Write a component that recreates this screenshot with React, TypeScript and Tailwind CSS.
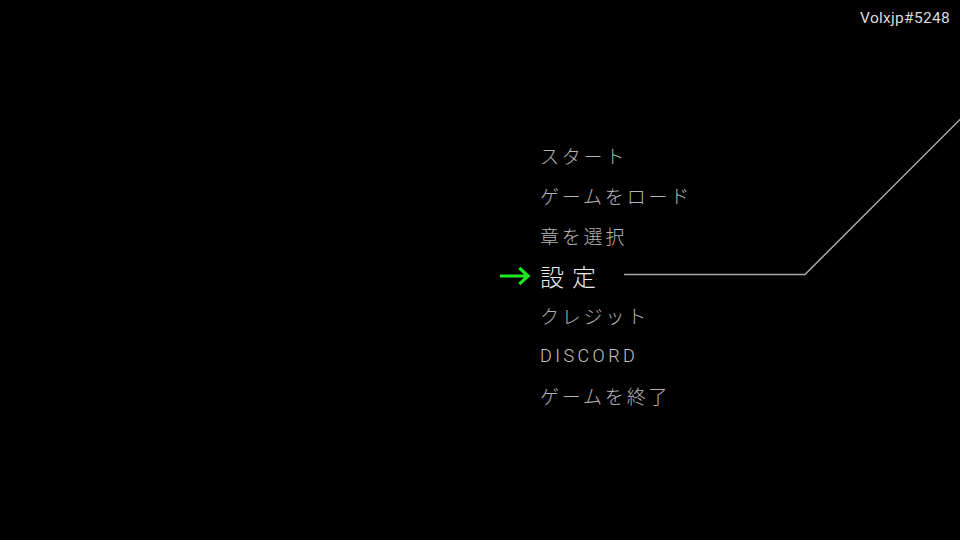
import React from "react";

const items = [
  "スタート",
  "ゲームをロード",
  "章を選択",
  "設定",
  "クレジット",
  "DISCORD",
  "ゲームを終了",
];

export default function App() {
  return (
    <div
      className="relative w-[960px] h-[540px] bg-black overflow-hidden"
      style={{ fontFamily: '"Noto Sans CJK JP", "Noto Sans", sans-serif' }}
    >
      <div className="flex justify-end pr-[10px] pt-[7px]">
        <span
          className="text-[15.5px] leading-[22px] text-[#dcdcdc] tracking-[0.3px]"
          style={{ fontFamily: 'Roboto, "Noto Sans", sans-serif' }}
        >
          Volxjp#5248
        </span>
      </div>

      <svg
        className="absolute left-0 top-0 pointer-events-none"
        width="960"
        height="540"
        viewBox="0 0 960 540"
      >
        <polyline
          points="624,274.5 805,274.5 962,117.5"
          fill="none"
          stroke="#a8a8a8"
          strokeWidth="1.5"
        />
      </svg>

      <div className="flex flex-col pl-[500px] pt-[107px]">
        {items.map((t) => {
          const sel = t === "設定";
          return (
            <div key={t} className="flex items-center h-[40px]">
              <div className="w-[40px] flex items-center">
                {sel && (
                  <svg width="32" height="20" viewBox="0 0 32 20">
                    <path
                      d="M1.5 10 H28 M20.5 3 L28 10 L20.5 17"
                      fill="none"
                      stroke="#1ee81e"
                      strokeWidth="3.2"
                      strokeLinecap="square"
                      strokeLinejoin="miter"
                    />
                  </svg>
                )}
              </div>
              {sel ? (
                <span className="text-[24px] leading-[40px] text-[#ececec] tracking-[8px] font-light">
                  {t}
                </span>
              ) : t === "DISCORD" ? (
                <span
                  className="text-[18px] leading-[40px] text-[#c4c4c4] tracking-[3.4px] font-light"
                  style={{ fontFamily: 'Roboto, "Noto Sans", sans-serif' }}
                >
                  {t}
                </span>
              ) : (
                <span className="text-[19px] leading-[40px] text-[#b4b4b4] tracking-[2.8px] font-light">
                  {t}
                </span>
              )}
            </div>
          );
        })}
      </div>
    </div>
  );
}
